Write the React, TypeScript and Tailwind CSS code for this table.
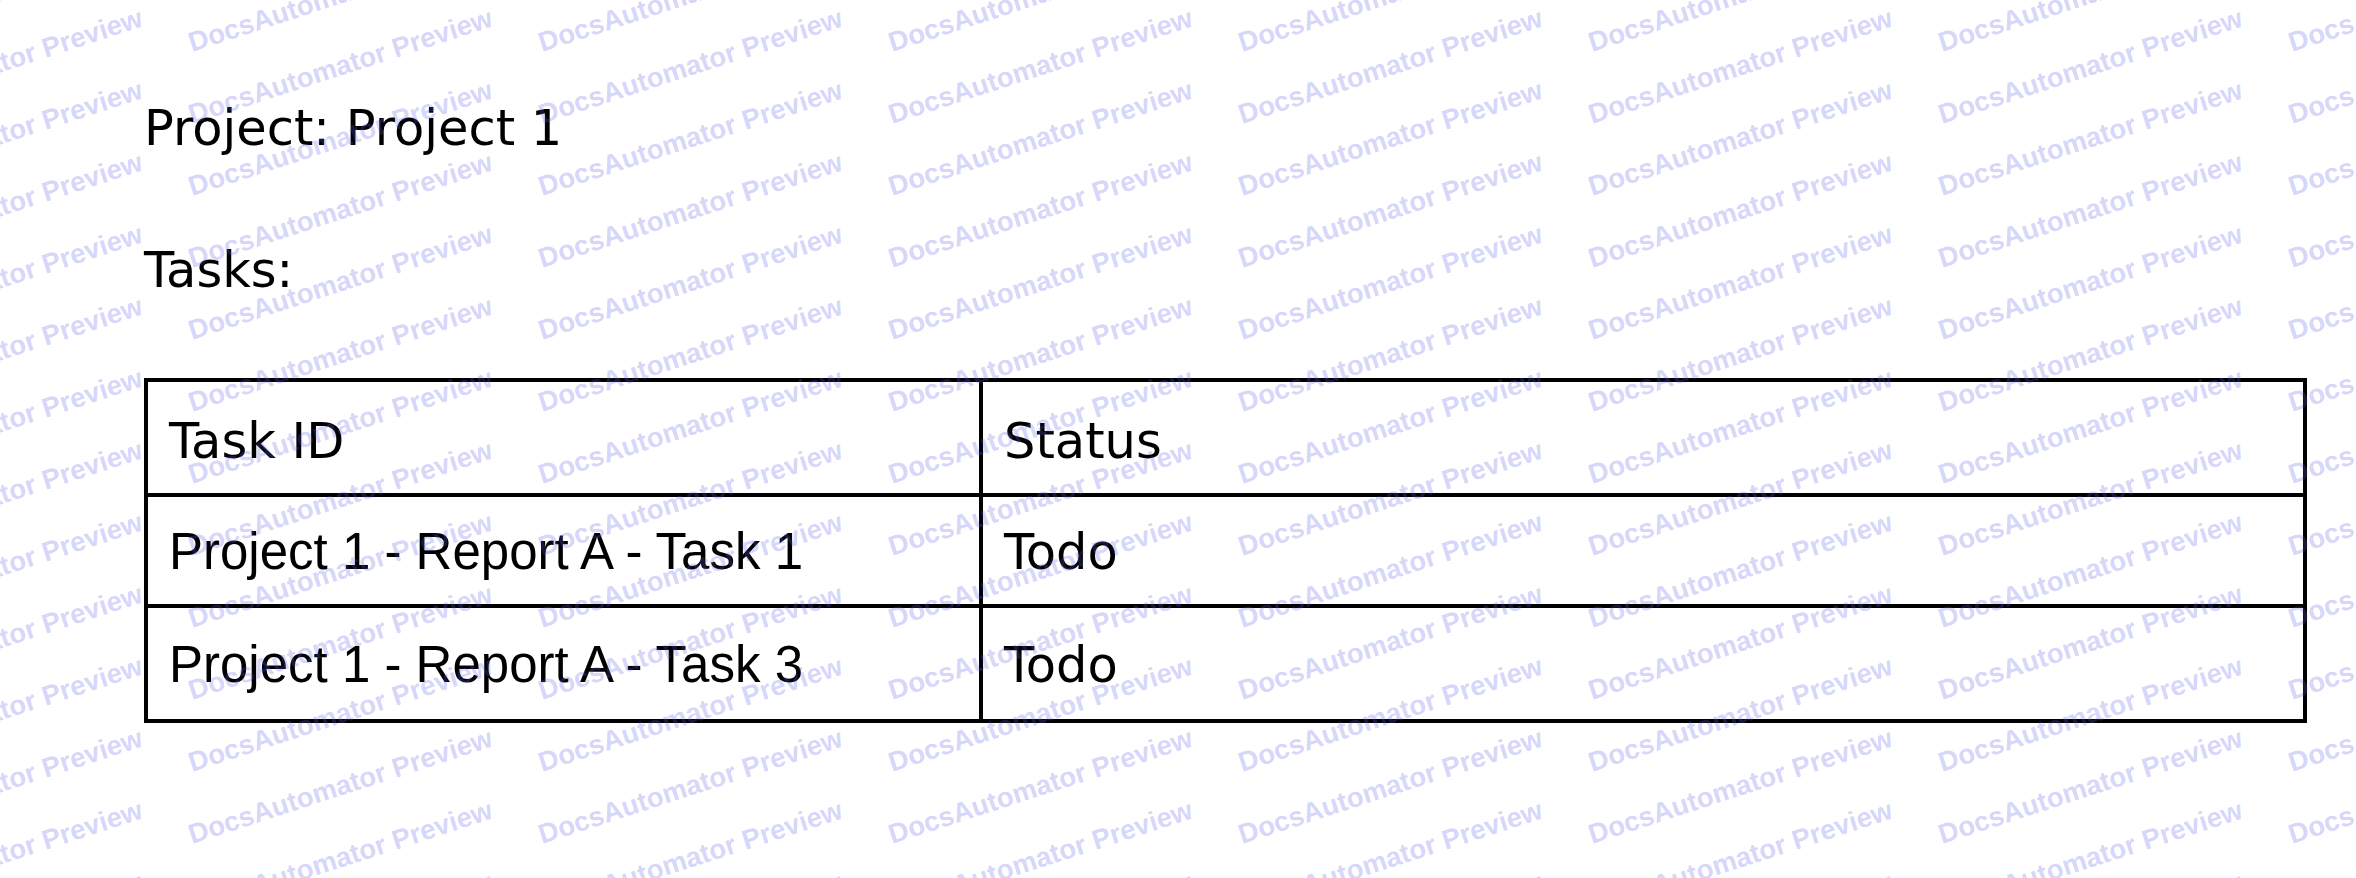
const rows = [
  { id: 'Project 1 - Report A - Task 1', status: 'Todo', h: 'h-[111px]' },
  { id: 'Project 1 - Report A - Task 3', status: 'Todo', h: 'h-[115px]' }
];

const heading = "font-['DejaVu_Sans',sans-serif] text-[49.5px] leading-[58px] text-black";

function Watermark() {
  const cells = Array.from({ length: 15 * 8 }, (_, i) => i);
  return (
    <div className="pointer-events-none absolute left-[-158px] top-[-43px] grid grid-cols-[repeat(8,350px)] grid-rows-[repeat(15,72px)]">
      {cells.map((i) => (
        <div key={i} className="relative h-[72px] w-[350px]">
          <span className="block origin-[0_23px] -rotate-[18deg] whitespace-nowrap font-['Liberation_Sans',Arial,sans-serif] text-[27.5px] font-bold leading-[27px] text-[rgb(95_95_235/0.27)]">
            DocsAutomator Preview
          </span>
        </div>
      ))}
    </div>
  );
}

export default function App() {
  return (
    <div className="relative h-[878px] w-[2356px] overflow-hidden bg-white">
      <div className="pl-[144px] pt-[99px]">
        <p className={heading}>Project: Project 1</p>
        <p className={`mt-[84px] ${heading}`}>Tasks:</p>

        <div className="mt-[79px] w-[2163px] border-4 border-black">
          <div className="grid h-[111px] grid-cols-[835px_1fr]">
            <div className="flex items-center border-r-4 border-black pl-[21px] pt-[6px]">
              <span className={heading}>Task ID</span>
            </div>
            <div className="flex items-center pl-[21px] pt-[6px]">
              <span className={heading}>Status</span>
            </div>
          </div>
          {rows.map((r) => (
            <div key={r.id} className={`grid grid-cols-[835px_1fr] border-t-4 border-black ${r.h}`}>
              <div className="flex items-center border-r-4 border-black pl-[21px] pt-[3px]">
                <span className="font-['Liberation_Sans',Arial,sans-serif] text-[51px] leading-[56px] text-black">
                  {r.id}
                </span>
              </div>
              <div className="flex items-center pl-[21px] pt-[3px]">
                <span className={heading}>{r.status}</span>
              </div>
            </div>
          ))}
        </div>
      </div>

      <Watermark />
    </div>
  );
}
